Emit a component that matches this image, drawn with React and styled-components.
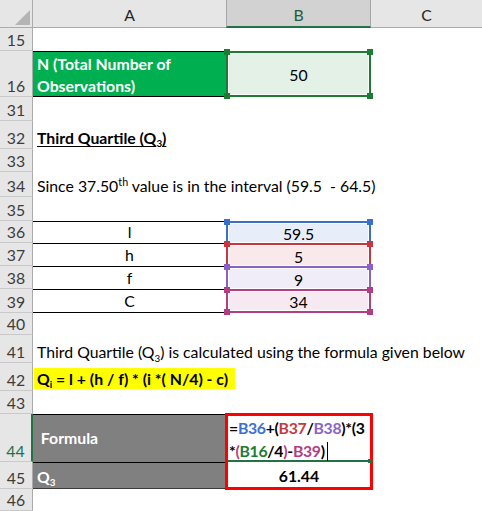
import React from "react";
import styled, { createGlobalStyle } from "styled-components";

const GlobalStyle = createGlobalStyle`
  html, body {
    margin: 0;
    padding: 0;
    background: #fff;
  }
  body {
    font-family: Lato, "Liberation Sans", sans-serif;
  }
`;

// header + rows 15,16,31..46
const ROW_HEIGHTS = [28, 23, 46, 24, 28, 23, 25, 24, 22, 23, 23, 24, 22, 28, 28, 23, 48, 27, 22];

const GREEN = "#217346";

const Sheet = styled.div`
  display: grid;
  grid-template-columns: 33px 193px 145px 111px;
  grid-template-rows: ${ROW_HEIGHTS.map((h) => `${h}px`).join(" ")};
  width: 482px;
  height: 511px;
  overflow: hidden;
  background: #fff;
  font-family: Lato, "Liberation Sans", sans-serif;
  font-size: 15.8px;
  color: #000;
`;

const Corner = styled.div`
  position: relative;
  background: #e6e6e6;
  border-right: 1px solid #ababab;
  border-bottom: 1px solid #ababab;

  &::after {
    content: "";
    position: absolute;
    right: 2px;
    bottom: 2px;
    width: 0;
    height: 0;
    border-left: 15px solid transparent;
    border-bottom: 15px solid #b4b4b4;
  }
`;

const ColHeader = styled.div`
  display: flex;
  align-items: center;
  justify-content: center;
  box-sizing: border-box;
  padding-top: 2px;
  font-size: 15.8px;
  background: ${({ $active }) => ($active ? "#d2d2d2" : "#e6e6e6")};
  color: ${({ $active }) => ($active ? "#1d5e39" : "#262626")};
  border-bottom: ${({ $active }) => ($active ? `2px solid ${GREEN}` : "1px solid #ababab")};
  border-left: ${({ $active }) => ($active ? "1px solid #a6a6a6" : "none")};
  border-right: ${({ $active }) => ($active ? "1px solid #a6a6a6" : "none")};
`;

const RowHeader = styled.div`
  display: flex;
  align-items: flex-end;
  justify-content: center;
  box-sizing: border-box;
  padding-bottom: 1px;
  font-size: 15.8px;
  background: #e6e6e6;
  color: ${({ $active }) => ($active ? GREEN : "#3c3c3c")};
  border-right: ${({ $active }) => ($active ? `2px solid ${GREEN}` : "1px solid #ababab")};
  border-bottom: 1px solid #c9c9c9;
`;

const Cell = styled.div`
  position: relative;
  display: flex;
  align-items: ${({ $middle }) => ($middle ? "center" : "flex-end")};
  justify-content: ${({ $center }) => ($center ? "center" : "flex-start")};
  box-sizing: border-box;
  padding: 0 4px 2px;
  white-space: nowrap;
  font-weight: ${({ $bold }) => ($bold ? 700 : 400)};
  background: ${({ $fill }) => $fill || "transparent"};
  color: ${({ $color }) => $color || "#000"};
  border-top: ${({ $top }) => ($top ? `1px solid ${$top}` : "none")};
  border-bottom: ${({ $bottom }) => ($bottom ? `1px solid ${$bottom}` : "none")};
`;

const WrapText = styled.div`
  white-space: normal;
  line-height: 22px;
  margin-bottom: -3px;
`;

const Heading = styled.span`
  font-weight: 700;
  text-decoration: underline;
  text-underline-offset: 2px;
`;

const Small = styled.span`
  font-size: ${({ $up }) => ($up ? "0.68em" : "0.62em")};
  position: relative;
  top: ${({ $up }) => ($up ? "-0.65em" : "0.35em")};
`;

const Highlight = styled.span`
  display: inline-block;
  height: 21px;
  line-height: 21px;
  margin-left: -3px;
  padding: 0 7px 0 3px;
  background: #ffff00;
  font-weight: 700;
`;

const RefCell = styled.div`
  position: relative;
  display: flex;
  align-items: center;
  justify-content: center;
  box-sizing: border-box;
  background: ${({ $fill }) => $fill};
  border: 2px solid ${({ $color }) => $color};
  border-bottom: ${({ $last, $color }) => ($last ? `2px solid ${$color}` : "none")};
  box-shadow: inset 0 0 0 1px #fff;
  padding-top: 1px;
`;

const Handle = styled.span`
  position: absolute;
  width: 6px;
  height: 6px;
  background: ${({ $color }) => $color};
  ${({ $y }) => ($y === "top" ? "top: -4px;" : "bottom: -4px;")}
  ${({ $x }) => ($x === "left" ? "left: -4px;" : "right: -4px;")}
  z-index: 2;
`;

const RedFrame = styled.div`
  grid-row: span 2;
  position: relative;
  z-index: 3;
  display: flex;
  flex-direction: column;
  margin: -1px -2px -1px -1px;
  border: 3px solid #ff0000;
  background: #fff;
`;

const FormulaCell = styled.div`
  position: relative;
  height: 46px;
  box-sizing: border-box;
  padding-left: 1px;
  border-bottom: 2px solid ${GREEN};
  font-weight: 700;
  line-height: 23px;
  letter-spacing: -0.3px;
  white-space: nowrap;

  &::after {
    content: "";
    position: absolute;
    right: -2px;
    bottom: -3px;
    width: 4px;
    height: 4px;
    background: ${GREEN};
  }
`;

const Tok = styled.span`
  color: ${({ $c }) => $c};
`;

const Caret = styled.span`
  display: inline-block;
  width: 1px;
  height: 19px;
  margin-left: 2px;
  background: #000;
  vertical-align: -4px;
`;

const ResultCell = styled.div`
  flex: 1;
  display: flex;
  align-items: center;
  justify-content: center;
  padding-top: 2px;
  font-weight: 700;
`;

const Corners = ({ color, bottom }) => (
  <>
    <Handle $color={color} $y="top" $x="left" />
    <Handle $color={color} $y="top" $x="right" />
    {bottom && <Handle $color={color} $y="bottom" $x="left" />}
    {bottom && <Handle $color={color} $y="bottom" $x="right" />}
  </>
);

const REFS = [
  { row: 36, label: "l", value: "59.5", color: "#3a6fcc", fill: "#e8eef9" },
  { row: 37, label: "h", value: "5", color: "#c8353e", fill: "#f9e9ea" },
  { row: 38, label: "f", value: "9", color: "#8862c4", fill: "#f0ecf8" },
  { row: 39, label: "C", value: "34", color: "#b13e84", fill: "#f7e9f1" },
];

const C = {
  blue: "#3c6fd0",
  red: "#c9373f",
  purple: "#8a63c8",
  green: "#1e7b34",
  magenta: "#b13e84",
};

export default function App() {
  return (
    <>
      <GlobalStyle />
      <Sheet>
        <Corner />
        <ColHeader>A</ColHeader>
        <ColHeader $active>B</ColHeader>
        <ColHeader>C</ColHeader>

        <RowHeader>15</RowHeader>
        <Cell />
        <Cell />
        <Cell />

        <RowHeader>16</RowHeader>
        <Cell $fill="#00b050" $color="#fff" $bold $top="#000" $bottom="#000">
          <WrapText>N (Total Number of Observations)</WrapText>
        </Cell>
        <RefCell $color={C.green} $fill="#e3f1e6" $last>
          50
          <Corners color={C.green} bottom />
        </RefCell>
        <Cell />

        <RowHeader>31</RowHeader>
        <Cell />
        <Cell />
        <Cell />

        <RowHeader>32</RowHeader>
        <Cell>
          <Heading>
            Third Quartile (Q<Small>3</Small>)
          </Heading>
        </Cell>
        <Cell />
        <Cell />

        <RowHeader>33</RowHeader>
        <Cell />
        <Cell />
        <Cell />

        <RowHeader>34</RowHeader>
        <Cell>
          Since 37.50<Small $up>th</Small>&nbsp;value is in the interval (59.5&nbsp; - 64.5)
        </Cell>
        <Cell />
        <Cell />

        <RowHeader>35</RowHeader>
        <Cell />
        <Cell />
        <Cell />

        {REFS.map((r, i) => (
          <React.Fragment key={r.row}>
            <RowHeader>{r.row}</RowHeader>
            <Cell $center $middle $top="#000" $bottom={i === REFS.length - 1 ? "#000" : null}>
              {r.label}
            </Cell>
            <RefCell $color={r.color} $fill={r.fill} $last={i === REFS.length - 1}>
              {r.value}
              <Corners color={r.color} bottom={i === REFS.length - 1} />
            </RefCell>
            <Cell />
          </React.Fragment>
        ))}

        <RowHeader>40</RowHeader>
        <Cell />
        <Cell />
        <Cell />

        <RowHeader>41</RowHeader>
        <Cell>
          Third Quartile (Q<Small>3</Small>) is calculated using the formula given below
        </Cell>
        <Cell />
        <Cell />

        <RowHeader>42</RowHeader>
        <Cell>
          <Highlight>
            Q<Small>i</Small> = l + (h / f) * (i *( N/4) - c)
          </Highlight>
        </Cell>
        <Cell />
        <Cell />

        <RowHeader>43</RowHeader>
        <Cell />
        <Cell />
        <Cell />

        <RowHeader $active>44</RowHeader>
        <Cell $fill="#808080" $color="#fff" $bold $middle $top="#000">
          &nbsp;Formula
        </Cell>
        <RedFrame>
          <FormulaCell>
            <div>
              =<Tok $c={C.blue}>B36</Tok>+(<Tok $c={C.red}>B37</Tok>/<Tok $c={C.purple}>B38</Tok>)*(3
            </div>
            <div>
              *<Tok $c={C.magenta}>(</Tok>
              <Tok $c={C.green}>B16</Tok>/4<Tok $c={C.magenta}>)</Tok>-<Tok $c={C.magenta}>B39</Tok>)
              <Caret />
            </div>
          </FormulaCell>
          <ResultCell>61.44</ResultCell>
        </RedFrame>
        <Cell />

        <RowHeader>45</RowHeader>
        <Cell $fill="#808080" $color="#fff" $bold $top="#000" $bottom="#3a3a3a">
          <span>
            Q<Small>3</Small>
          </span>
        </Cell>
        <Cell />

        <RowHeader>46</RowHeader>
        <Cell />
        <Cell />
        <Cell />
      </Sheet>
    </>
  );
}
